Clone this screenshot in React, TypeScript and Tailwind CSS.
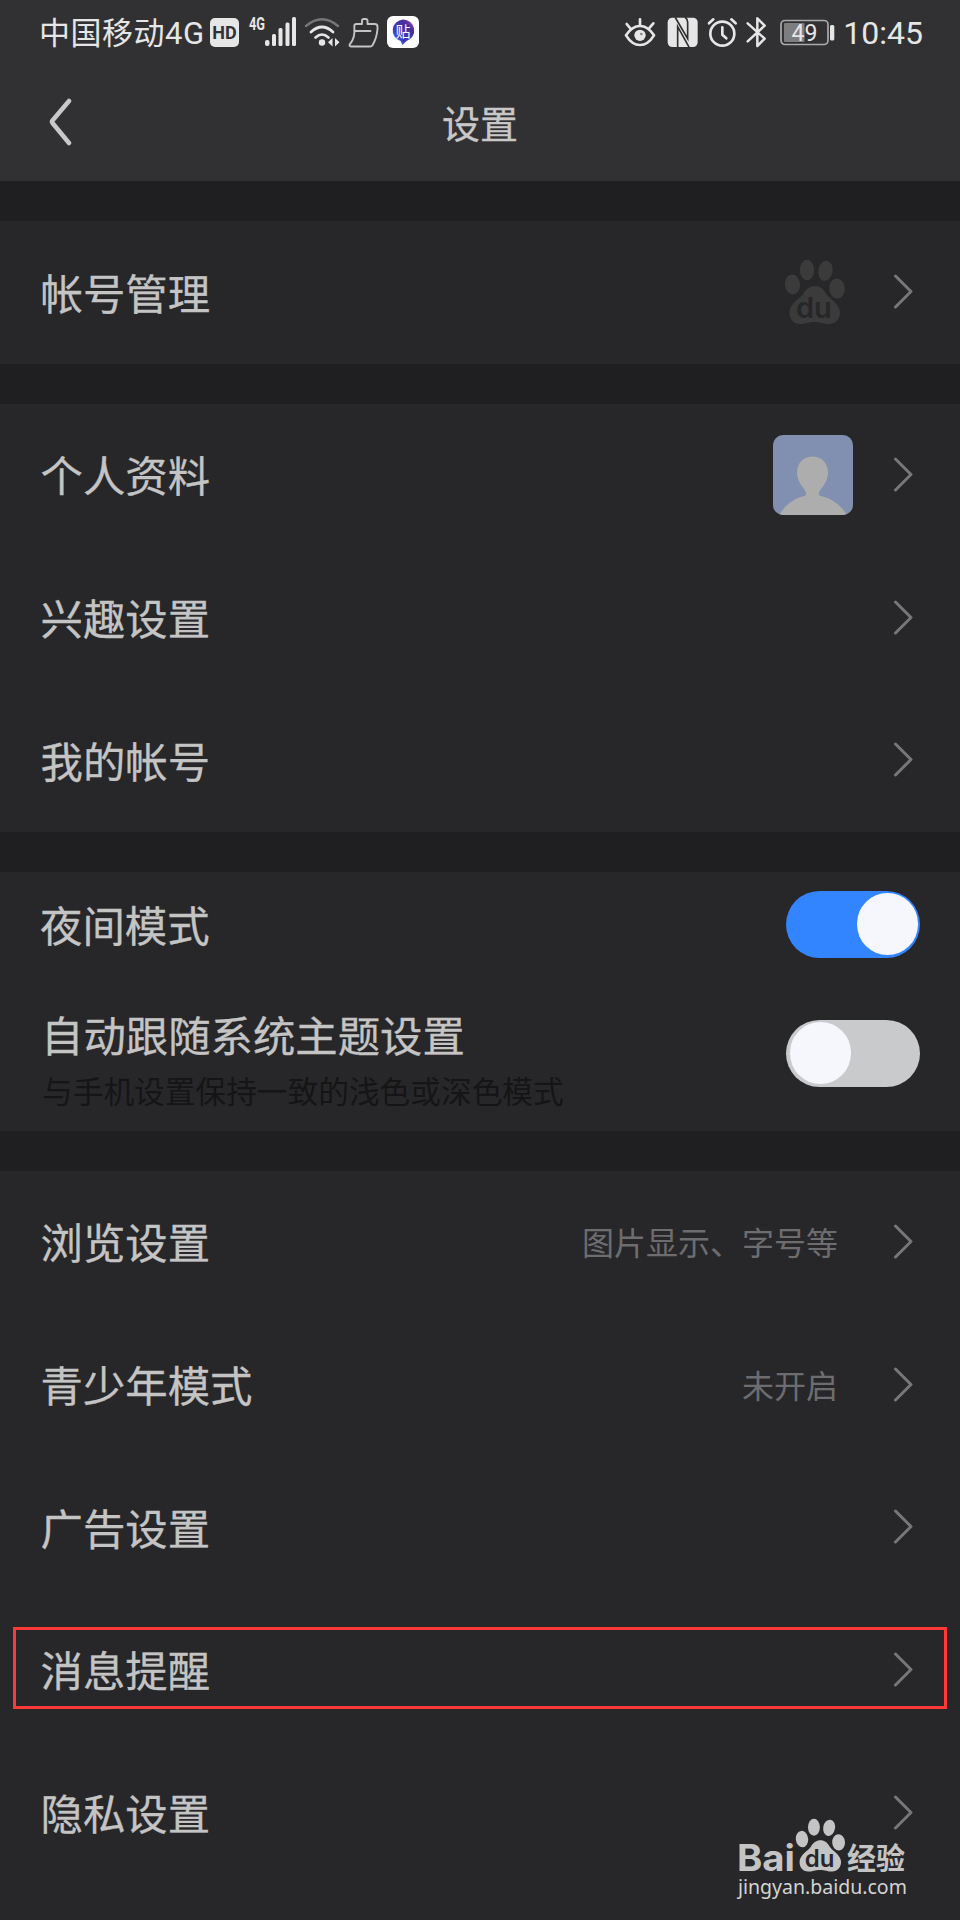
import type { ReactNode } from 'react'

const FONT = "font-['Roboto','Noto_Sans_CJK_SC',sans-serif]"

function StatusBar() {
  return (
    <div className="flex h-[66px] items-start pt-4 text-[#e6e6e6]">
      <div className="flex h-[37px] w-[210px] shrink-0 items-center pl-[39px] text-[31px] tracking-[0.5px] whitespace-nowrap">
        中国移动4G
      </div>

      {/* HD */}
      <div className="mt-[2px] flex h-[29px] w-[29px] shrink-0 items-center justify-center rounded-[5px] bg-[#e6e6e6] text-[18px] leading-[29px] font-bold text-[#313133]">
        HD
      </div>

      {/* 信号 */}
      <svg className="ml-[9px] h-8 w-[50px] shrink-0 overflow-visible" viewBox="0 0 50 32" fill="#e6e6e6">
        <text x="1" y="14" fontSize="18" fontWeight="700" textLength="16" lengthAdjust="spacingAndGlyphs">
          4G
        </text>
        <rect x="17" y="24" width="4.500" height="6" rx="2" />
        <rect x="24" y="18" width="4" height="12" rx="1.500" />
        <rect x="30.500" y="12" width="4" height="18" rx="1.500" />
        <rect x="37.500" y="6.500" width="4" height="23.500" rx="1.500" />
        <rect x="44" y="1" width="4" height="29" rx="1.500" />
      </svg>

      {/* Wi-Fi */}
      <svg className="ml-[6px] h-8 w-9 shrink-0" viewBox="0 0 36 32" fill="none" strokeLinecap="round">
        <path d="M2 10Q18 -3.500 34 10" stroke="#77777a" strokeWidth="2.400" />
        <path d="M7 16Q18 6 29 16" stroke="#e6e6e6" strokeWidth="2.800" />
        <path d="M11.500 21.500Q18 15.500 24.500 21.500" stroke="#e6e6e6" strokeWidth="2.600" />
        <circle cx="18" cy="26.500" r="3.200" fill="#e6e6e6" />
        <path d="M28.500 22v8.500l-4.500-4.300zM31 22v8.500l4.500-4.300z" fill="#e6e6e6" />
      </svg>

      {/* 清理 */}
      <svg
        className="ml-[8px] h-8 w-[31px] shrink-0"
        viewBox="0 0 31 32"
        fill="none"
        stroke="#c4c4c4"
        strokeWidth="1.900"
        strokeLinecap="round"
        strokeLinejoin="round"
      >
        <path d="M8.500 8h5.500V4.800q0-1.800 1.800-1.800h1.900q1.800 0 1.800 1.800V8h7.300q2.700 0 2.700 2.700v2.500Q28.500 23 24.500 29.200q-.8 1.300-2.400 1.300H3.200Q.5 30.500 2 28 7.500 22 6.300 10.200 6.300 8 8.500 8z" />
        <path d="M6.500 15h16" />
      </svg>

      {/* 贴吧 */}
      <svg className="ml-[8px] h-8 w-8 shrink-0" viewBox="0 0 32 32">
        <defs>
          <linearGradient id="tieba" x1="0" y1="1" x2="1" y2="0">
            <stop offset="0" stopColor="#3aa0f5" />
            <stop offset="0.350" stopColor="#3f38b8" />
            <stop offset="0.750" stopColor="#4a2f9c" />
            <stop offset="1" stopColor="#e04fc0" />
          </linearGradient>
        </defs>
        <rect width="32" height="32" rx="6" fill="#fff" />
        <path d="M16 3.500a11 11 0 0 1 3.500 21.500L15.500 29l-2-4A11 11 0 0 1 16 3.500z" fill="url(#tieba)" />
        <text x="16" y="20.500" fontSize="15" textAnchor="middle" fill="#fff">
          贴
        </text>
      </svg>

      {/* 护眼 */}
      <svg className="ml-auto h-8 w-8 shrink-0" viewBox="0 0 96 96" fill="none" stroke="#e6e6e6" strokeWidth="8">
        <path d="M6 58Q24 30 48 30T90 58Q72 87 48 87T6 58z" strokeLinejoin="round" />
        <path d="M48 10v18M8 24l11 13M88 22L77 35" strokeLinecap="round" />
        <circle cx="48" cy="58" r="17" fill="#e6e6e6" stroke="none" />
        <circle cx="52" cy="54" r="4" fill="#88888a" stroke="none" />
      </svg>

      {/* NFC */}
      <svg className="ml-[11px] h-8 w-[31px] shrink-0" viewBox="0 0 93 96">
        <rect x="2" y="5" width="90" height="88" rx="14" fill="#e6e6e6" />
        <path d="M24 3L62 68V19Q62 10 54 3M32 95V32L67 95" fill="none" stroke="#313133" strokeWidth="5" />
      </svg>

      {/* 闹钟 */}
      <svg
        className="ml-[9px] h-8 w-[31px] shrink-0"
        viewBox="0 0 93 96"
        fill="none"
        stroke="#e6e6e6"
        strokeWidth="8"
        strokeLinecap="round"
        strokeLinejoin="round"
      >
        <circle cx="46" cy="53" r="36" />
        <path d="M46 34v22l12 11M6 22L19 10M73 10l13 12" />
      </svg>

      {/* 蓝牙 */}
      <svg
        className="ml-[8px] h-8 w-5 shrink-0"
        viewBox="0 0 60 96"
        fill="none"
        stroke="#e6e6e6"
        strokeWidth="7.500"
        strokeLinejoin="round"
        strokeLinecap="round"
      >
        <path d="M5 22l51 46-22 22V7l22 22L5 76" />
      </svg>

      {/* 电量 */}
      <svg className="ml-[14px] h-8 w-[56px] shrink-0" viewBox="0 0 56 32">
        <rect x="1" y="4.500" width="47" height="24" rx="4" fill="none" stroke="#aaaaac" strokeWidth="1.700" />
        <rect x="4" y="7" width="20.500" height="19" rx="1" fill="#7e7e80" />
        <rect x="50" y="9" width="4.300" height="15.500" rx="1.500" fill="#e6e6e6" />
        <text x="24.500" y="25" fontSize="23" textAnchor="middle" fill="#e6e6e6">
          49
        </text>
      </svg>

      <div className="mr-[37px] ml-[7px] flex h-[33px] items-center text-[32px]">10:45</div>
    </div>
  )
}

function Header() {
  return (
    <div className="flex h-[115px] items-center">
      <div className="w-[200px] pl-[48px]">
        <svg
          className="mb-[4px] h-12 w-6"
          viewBox="0 0 24 48"
          fill="none"
          stroke="#c8c8c8"
          strokeWidth="4.500"
          strokeLinecap="round"
          strokeLinejoin="round"
        >
          <path d="M21 3L4.500 22.500a2 2 0 0 0 0 2.500L21 45" />
        </svg>
      </div>
      <h1 className="flex-1 pt-[3px] text-center text-[38px] text-[#c8c8c8] [-webkit-text-stroke:0.3px]">设置</h1>
      <div className="w-[200px]" />
    </div>
  )
}

function Chevron() {
  return (
    <svg
      className="h-9 w-5"
      viewBox="0 0 20 36"
      fill="none"
      stroke="#77777a"
      strokeWidth="3"
      strokeLinecap="round"
      strokeLinejoin="round"
    >
      <path d="M2.500 2L18 17.500 2.500 33" />
    </svg>
  )
}

function BaiduPaw({ className }: { className: string }) {
  return (
    <svg className={className} viewBox="0 0 62 66" fill="currentColor">
      <ellipse cx="8.500" cy="25.500" rx="7.500" ry="10" transform="rotate(-6 8.500 25.500)" />
      <ellipse cx="23" cy="11" rx="7.200" ry="10.300" />
      <ellipse cx="41.500" cy="11.800" rx="7.200" ry="10" transform="rotate(10 41.500 11.800)" />
      <ellipse cx="53" cy="29.500" rx="7.800" ry="10" transform="rotate(-4 53 29.500)" />
      <path d="M31 27c5 0 8.500 3 11 7.500 3 5 14 10 14 19 0 6-4 11.500-11 11.500-6 0-8-2-14.500-2S22 65 16 65C9 65 5.500 59.500 5.500 53.500c0-9 11-14 14-19C22 30 26 27 31 27z" />
    </svg>
  )
}

function Avatar() {
  return (
    <svg className="h-20 w-20 rounded-[10px]" viewBox="0 0 80 80">
      <rect width="80" height="80" fill="#8190b0" />
      <path d="M39.500 21.500c9 0 15.500 6.500 15.500 16 0 7-4 13-8 18-1.500 2-1.500 4 0 6H32c1.500-2 1.500-4 0-6-4-5-8-11-8-18 0-9.500 6.500-16 15.500-16z" fill="#adadad" />
      <path d="M6 80C14 67 26 60 39.500 60S66 67 74 80z" fill="#adadad" />
    </svg>
  )
}

interface RowProps {
  label: string
  value?: string
  highlight?: boolean
  children?: ReactNode
}

function Row({ label, value, highlight, children }: RowProps) {
  return (
    <div className="relative flex h-[142.67px] items-center pr-[47px] pl-[40.500px]">
      <span className="pt-[7px] text-[42.400px] leading-none text-[#c4c4c4] [-webkit-text-stroke:0.3px]">{label}</span>
      <div className="ml-auto flex items-center">
        {value && <span className="mr-[55px] pt-[4px] text-[32px] leading-none text-[#6d6d6f]">{value}</span>}
        {children}
        <Chevron />
      </div>
      {highlight && (
        <div className="absolute top-[28px] right-[13px] left-[13px] h-[82px] border-3 border-[#ff3838]" />
      )}
    </div>
  )
}

function Toggle({ on }: { on?: boolean }) {
  return (
    <div
      className={`flex h-[67px] w-[134px] shrink-0 items-center rounded-full pr-[2px] pl-[4px] ${
        on ? 'justify-end bg-[#3385ff]' : 'bg-[#c9cacc]'
      }`}
    >
      <div className="h-[62px] w-[61px] rounded-full bg-[#f5f7fc]" />
    </div>
  )
}

function Section({ children }: { children: ReactNode }) {
  return <section className="bg-[#272729]">{children}</section>
}

function Watermark() {
  return (
    <div className="absolute top-[1817px] left-[735px] w-[180px] text-[#c4c4c4]">
      <svg className="block h-[56px] w-[172px] overflow-visible" viewBox="0 0 172 56" fill="currentColor">
        <text x="2" y="53.500" fontSize="37" fontWeight="700" fontFamily="Inter, sans-serif" textLength="58" lengthAdjust="spacingAndGlyphs">
          Bai
        </text>
        <svg x="60" y="1" width="51" height="54.500">
          <BaiduPaw className="h-[54.500px] w-[51px]" />
        </svg>
        <text x="84.500" y="49.500" fontSize="24" fontWeight="600" fill="#272729" textAnchor="middle" fontFamily="Inter, sans-serif">
          du
        </text>
        <text x="112" y="51.500" fontSize="30" fontWeight="700" textLength="58" lengthAdjust="spacingAndGlyphs">
          经验
        </text>
      </svg>
      <div className="pt-[1px] pl-[3px] font-['Noto_Sans',sans-serif] text-[19.500px] leading-[26px] whitespace-nowrap text-[#d4d4d4]">
        jingyan.baidu.com
      </div>
    </div>
  )
}

export default function App() {
  return (
    <div className={`relative h-[1920px] w-[960px] overflow-hidden bg-[#272729] ${FONT}`}>
      <header className="bg-[#313133]">
        <StatusBar />
        <Header />
      </header>

      <main className="flex flex-col gap-[40px] bg-[#1f1f21] pt-[40px]">
        <Section>
          <Row label="帐号管理">
            <div className="relative mr-[47px] text-[#3b3b3b]">
              <BaiduPaw className="h-[66px] w-[62px]" />
              <span className="absolute top-[34px] left-[12px] font-['Inter',sans-serif] text-[29px] leading-none font-semibold text-[#272729]">
                du
              </span>
            </div>
          </Row>
        </Section>

        <Section>
          <Row label="个人资料">
            <div className="mr-[40px]">
              <Avatar />
            </div>
          </Row>
          <Row label="兴趣设置" />
          <Row label="我的帐号" />
        </Section>

        <Section>
          <div className="flex h-[105px] items-center pr-[40px] pl-[40px]">
            <span className="pt-[8px] text-[42.400px] leading-none text-[#c4c4c4] [-webkit-text-stroke:0.3px]">
              夜间模式
            </span>
            <div className="ml-auto">
              <Toggle on />
            </div>
          </div>
          <div className="flex h-[154px] items-start pt-[40px] pr-[40px] pl-[41px]">
            <div className="flex flex-col gap-[19px]">
              <span className="text-[42.400px] leading-none text-[#c4c4c4] [-webkit-text-stroke:0.3px]">
                自动跟随系统主题设置
              </span>
              <span className="pl-[1px] text-[30.700px] leading-none text-[#151516]">
                与手机设置保持一致的浅色或深色模式
              </span>
            </div>
            <div className="mt-[3px] ml-auto">
              <Toggle />
            </div>
          </div>
        </Section>

        <Section>
          <Row label="浏览设置" value="图片显示、字号等" />
          <Row label="青少年模式" value="未开启" />
          <Row label="广告设置" />
          <Row label="消息提醒" highlight />
          <Row label="隐私设置" />
          <div className="h-[60px]" />
        </Section>
      </main>

      <Watermark />
    </div>
  )
}
